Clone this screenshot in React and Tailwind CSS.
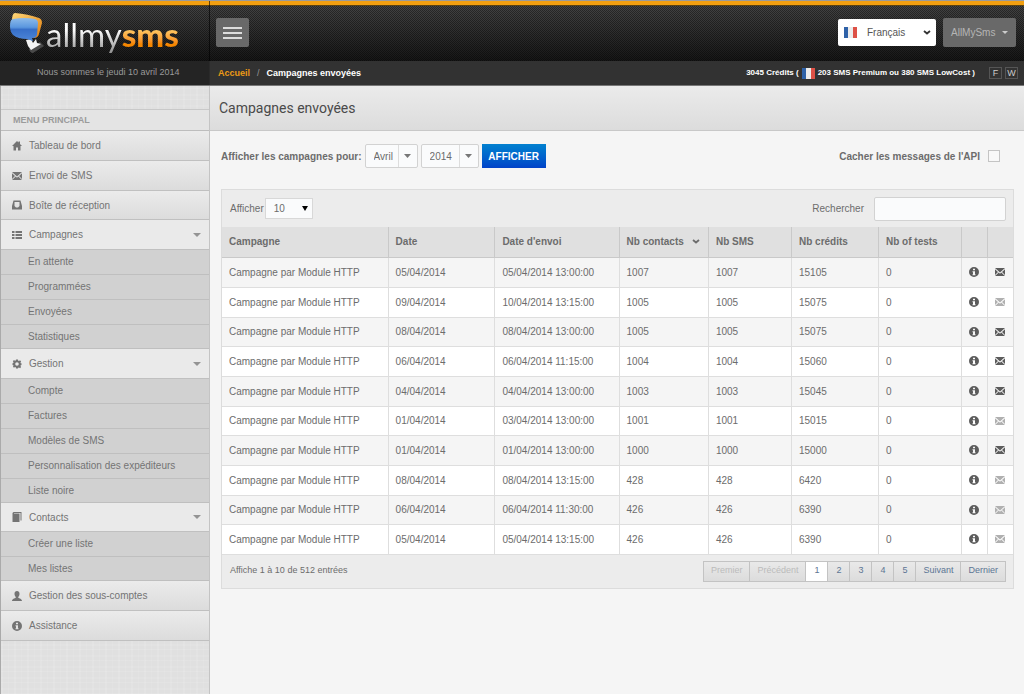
import { useState } from "react";

const MENU = [
  { label: "Tableau de bord", icon: "home" },
  { label: "Envoi de SMS", icon: "mail" },
  { label: "Boîte de réception", icon: "inbox" },
  { label: "Campagnes", icon: "list", items: ["En attente", "Programmées", "Envoyées", "Statistiques"] },
  {
    label: "Gestion",
    icon: "cog",
    items: ["Compte", "Factures", "Modèles de SMS", "Personnalisation des expéditeurs", "Liste noire"]
  },
  { label: "Contacts", icon: "book", items: ["Créer une liste", "Mes listes"] },
  { label: "Gestion des sous-comptes", icon: "user" },
  { label: "Assistance", icon: "info" }
];

const COLUMNS = [
  { label: "Campagne", width: "w-[21%]" },
  { label: "Date", width: "w-[13.5%]" },
  { label: "Date d'envoi", width: "w-[15.7%]" },
  { label: "Nb contacts", width: "w-[11.3%]", sorted: true },
  { label: "Nb SMS", width: "w-[10.5%]" },
  { label: "Nb crédits", width: "w-[11%]" },
  { label: "Nb of tests", width: "w-[10.5%]" }
];

const CAMPAIGNS = [
  { date: "05/04/2014", sent: "05/04/2014 13:00:00", contacts: 1007, credits: 15105, mail: true },
  { date: "09/04/2014", sent: "10/04/2014 13:15:00", contacts: 1005, credits: 15075, mail: false },
  { date: "08/04/2014", sent: "08/04/2014 13:00:00", contacts: 1005, credits: 15075, mail: true },
  { date: "06/04/2014", sent: "06/04/2014 11:15:00", contacts: 1004, credits: 15060, mail: true },
  { date: "04/04/2014", sent: "04/04/2014 13:00:00", contacts: 1003, credits: 15045, mail: true },
  { date: "01/04/2014", sent: "03/04/2014 13:00:00", contacts: 1001, credits: 15015, mail: false },
  { date: "01/04/2014", sent: "01/04/2014 13:00:00", contacts: 1000, credits: 15000, mail: true },
  { date: "08/04/2014", sent: "08/04/2014 13:15:00", contacts: 428, credits: 6420, mail: false },
  { date: "06/04/2014", sent: "06/04/2014 11:30:00", contacts: 426, credits: 6390, mail: false },
  { date: "05/04/2014", sent: "05/04/2014 13:15:00", contacts: 426, credits: 6390, mail: false }
];

const PAGES = ["Premier", "Précédent", "1", "2", "3", "4", "5", "Suivant", "Dernier"];

function Icon({ name, className = "" }) {
  return (
    <svg viewBox="0 0 20 20" className={`size-[10px] shrink-0 ${className}`} fill="currentColor" aria-hidden="true">
      {name === "home" && <path d="M10 0 0 10h3v9h5v-6h4v6h5v-9h3l-4-4V1h-3v2z" />}
      {name === "mail" && (
        <path d="M0 2h20L10 11zM0 4.500l6 5.500-6 6zM20 4.500v11.500l-6-6zM0 18l7.500-7 2.500 2.300 2.500-2.300L20 18z" />
      )}
      {name === "inbox" && (
        <path fillRule="evenodd" d="M3 1h14l3 11v7H0v-7zM5 4v8l3 3h4l3-3V4z" />
      )}
      {name === "list" && <path d="M0 2h5v4H0zM7 2h13v4H7zM0 8h5v4H0zM7 8h13v4H7zM0 14h5v4H0zM7 14h13v4H7z" />}
      {name === "cog" && (
        <path
          fillRule="evenodd"
          d="M8 1h4l.5 2.500 1.500.6 2.100-1.400 2.200 2.200-1.400 2.100.6 1.500L19 8.500v3.500l-1.500.5-.6 1.500 1.400 2.100-2.200 2.200-2.100-1.400-1.500.6L12 19H8l-.5-2.500-1.500-.6-2.100 1.400-2.200-2.200L3.100 14l-.6-1.500L1 12V8.500l1.500-.5.6-1.500-1.400-2.100 2.200-2.200L6 3.600 7.500 3zM10 6.500a3.600 3.600 0 1 0 0 7.200 3.600 3.600 0 0 0 0-7.200z"
        />
      )}
      {name === "book" && <path d="M3 0h16v17h-2V2H4v1h11v17H1V2z" />}
      {name === "user" && (
        <path d="M10 0c3 0 5 2 5 5.500S13.500 11 12.500 12v1.500c2 1.500 7.500 2 7.500 6.500H0c0-4.500 5.500-5 7.500-6.500V12C6.500 11 5 9 5 5.500S7 0 10 0z" />
      )}
      {name === "info" && (
        <path
          fillRule="evenodd"
          d="M10 0a10 10 0 1 1 0 20 10 10 0 0 1 0-20zM8 3.500v3h4v-3zM7 8.500v2h1v4H7v2h6v-2h-1v-6z"
        />
      )}
    </svg>
  );
}

function Caret({ className = "h-1 w-2" }) {
  return (
    <svg viewBox="0 0 8 4" preserveAspectRatio="none" className={`pointer-events-none shrink-0 ${className}`} fill="currentColor" aria-hidden="true">
      <path d="M0 0h8L4 4z" />
    </svg>
  );
}

function Chevron({ className = "" }) {
  return (
    <svg viewBox="0 0 8 5" className={`pointer-events-none h-[5px] w-2 shrink-0 ${className}`} fill="none" stroke="currentColor" strokeWidth="1.800" aria-hidden="true">
      <path d="M1 1l3 2.500L7 1" />
    </svg>
  );
}

function Flag() {
  return (
    <svg viewBox="0 0 13 11" className="h-[11px] w-[13px] shrink-0" role="img" aria-label="France">
      <rect width="13" height="11" fill="#ececec" />
      <rect width="4" height="11" fill="#2f62a8" />
      <rect x="9" width="4" height="11" fill="#dd5146" />
    </svg>
  );
}

function Logo() {
  return (
    <a href="#" className="flex items-start" aria-label="allmysms">
      <svg viewBox="0 0 37 42" className="h-[42px] w-[37px] shrink-0" aria-hidden="true">
        <defs>
          <linearGradient id="bubbleBlue" x1="0" y1="0" x2="0" y2="1">
            <stop offset="0" stopColor="#8dbbea" />
            <stop offset="0.400" stopColor="#5b97df" />
            <stop offset="0.500" stopColor="#376fc8" />
            <stop offset="1" stopColor="#4d86d8" />
          </linearGradient>
          <linearGradient id="bubbleOrange" x1="0" y1="0" x2="1" y2="1">
            <stop offset="0" stopColor="#ffd77a" />
            <stop offset="1" stopColor="#e07c0a" />
          </linearGradient>
        </defs>
        <path d="M20 36l11-7 4 4-11 7q-3 0-4-4z" fill="#4a4a4a" />
        <path d="M6 0q13 1 24 5 3 1 3 5l-3 11q-1 4-5 4L3 8q0-8 3-8z" fill="url(#bubbleOrange)" />
        <path d="M17 27l5-1 2 4 3-4 1 4 4 1-10 6-3-4z" fill="#f4f4f4" />
        <path d="M4 6q11-2 22 0 3 1 3 4l-1 12q-1 3-4 3l-1 0 1 3-6-2q-9 0-14-4-3-3-3-9 0-7 3-7z" fill="url(#bubbleBlue)" />
      </svg>
      <span className="font-[Lato] text-[33px] leading-[42px]">
        <span className="bg-linear-to-b from-white from-40% to-[#8b8b8b] bg-clip-text text-transparent">allmy</span>
        <span className="bg-linear-to-b from-[#ffd06a] from-35% to-[#f58600] to-75% bg-clip-text font-black text-transparent">sms</span>
      </span>
    </a>
  );
}

function Header() {
  return (
    <header className="flex h-[61px] border-t border-[#9b9b9b] bg-[repeating-conic-gradient(#00000066_0_25%,transparent_0_50%),linear-gradient(#484848,#161616)] bg-size-[2px_2px,100%_100%] shadow-[inset_0_4px_#f3a011,inset_0_5px_#5c4311]">
      <div className="w-[210px] shrink-0 border-r border-black/60 pt-3 pl-[9px]">
        <Logo />
      </div>
      <div className="flex grow items-start gap-[7px] pt-[17px] pr-2 pl-[6px]">
        <button type="button" aria-label="Menu" className="mr-auto flex h-[29px] w-[33px] flex-col items-center justify-center gap-[3px] rounded-xs bg-[#696969]">
          <span className="h-[2px] w-[19px] bg-[#ddd]" />
          <span className="h-[2px] w-[19px] bg-[#ddd]" />
          <span className="h-[2px] w-[19px] bg-[#ddd]" />
        </button>
        <div className="mt-px flex h-[27px] w-[98px] items-center gap-[10px] rounded-xs bg-white pr-[5px] pl-[6px]">
          <Flag />
          <select aria-label="Langue" className="min-w-0 grow appearance-none text-[10px] text-[#555]">
            <option>Français</option>
          </select>
          <Chevron className="text-[#333]" />
        </div>
        <button type="button" className="flex h-[29px] w-[73px] items-center justify-between rounded-xs bg-[#696969] px-2 text-[10px] text-[#b5b5b5]">
          AllMySms
          <Caret className="h-[3px] w-[6px] text-[#ccc]" />
        </button>
      </div>
    </header>
  );
}

function SubHeader() {
  return (
    <div className="flex h-[25px] items-center border-b border-[#777] bg-[#323232] text-[9px] font-bold text-white">
      <div className="flex w-[210px] shrink-0 items-center self-stretch border-r border-[#2a2a2a] bg-[#242424] pl-[37px] font-normal text-[#9a9a9a]">
        Nous sommes le jeudi 10 avril 2014
      </div>
      <nav className="flex grow gap-[7px] pt-px pl-2">
        <a href="#" className="text-[#eb9a15]">Accueil</a>
        <span className="font-normal text-[#999]">/</span>
        <span>Campagnes envoyées</span>
      </nav>
      <p className="flex items-center gap-[3px] pr-[14px] text-[8px]">
        3045 Crédits ( <Flag /> 203 SMS Premium ou 380 SMS LowCost )
      </p>
      <div className="flex gap-[3px] pr-[6px] font-normal text-[#ccc]">
        <button type="button" className="h-3 w-[13px] border border-[#555] leading-[10px]">F</button>
        <button type="button" className="h-3 w-[13px] border border-[#555] leading-[10px]">W</button>
      </div>
    </div>
  );
}

function Sidebar() {
  return (
    <aside className="w-[210px] shrink-0 border-r border-l border-r-[#c4c4c4] border-l-[#aaa] bg-[#e0e0e0] bg-[repeating-linear-gradient(0deg,#ffffff18_0_1px,transparent_1px_4px,#ffffff14_4px_6px,transparent_6px_11px),repeating-linear-gradient(90deg,#ffffff18_0_2px,transparent_2px_7px,#ffffff14_7px_8px,transparent_8px_13px)] pt-[23px] text-[10px] text-[#747474]">
      <h2 className="h-[22px] border-t border-b border-t-[#c9c9c9] border-b-[#bdbdbd] bg-[#e4e4e4] pl-3 text-[9px] leading-5 font-bold text-[#9b9b9b]">
        MENU PRINCIPAL
      </h2>
      <ul>
        {MENU.map((entry) => (
          <li key={entry.label} className="[&:nth-child(3n)>a]:h-[29px]">
            <a
              href="#"
              className={`flex h-[30px] items-center gap-[7px] border-b border-[#c0c0c0] pr-2 pl-[11px] ${
                entry.items ? "bg-[#eaeaea]" : "bg-linear-to-b from-[#ebebeb] to-[#dcdcdc]"
              }`}
            >
              <Icon name={entry.icon} />
              <span className="grow">{entry.label}</span>
              {entry.items && <Caret className="h-1 w-2 text-[#949494]" />}
            </a>
            {entry.items && (
              <ul>
                {entry.items.map((item) => (
                  <li key={item} className="h-[25px] border-b border-[#bfbfbf] bg-[#d1d1d1] last:h-6">
                    <a href="#" className="block pl-[27px] leading-6">{item}</a>
                  </li>
                ))}
              </ul>
            )}
          </li>
        ))}
      </ul>
    </aside>
  );
}

function FilterSelect({ id, label, value, className }) {
  return (
    <div className={`relative flex h-6 items-center rounded-xs border border-[#d2d2d2] bg-[#fafbfc] text-[10px] ${className}`}>
      <select id={id} aria-label={label} className="h-full w-full appearance-none pl-2">
        <option>{value}</option>
      </select>
      <span className="pointer-events-none absolute inset-y-0 right-0 flex w-[19px] items-center justify-center border-l border-[#ddd]">
        <Caret className="h-1 w-[7px] text-[#777]" />
      </span>
    </div>
  );
}

function Filters() {
  const [hideApi, setHideApi] = useState(false);

  return (
    <form className="flex items-center gap-[3px] pr-[14px]" onSubmit={(e) => e.preventDefault()}>
      <label htmlFor="month" className="text-[10px] font-bold">Afficher les campagnes pour:</label>
      <FilterSelect id="month" label="Mois" value="Avril" className="w-[53px]" />
      <FilterSelect id="year" label="Année" value="2014" className="w-[58px]" />
      <button type="submit" className="h-6 w-16 bg-linear-to-b from-[#0581cf] to-[#0342c8] text-[10px] font-bold text-white">
        AFFICHER
      </button>
      <label className="ml-auto flex items-center gap-2 text-[10px] font-bold">
        Cacher les messages de l'API
        <input
          type="checkbox"
          checked={hideApi}
          onChange={(e) => setHideApi(e.target.checked)}
          className="size-3 appearance-none border border-[#c4c4c4] bg-[#f8f8f8] checked:bg-[#0581cf]"
        />
      </label>
    </form>
  );
}

function CampaignTable() {
  return (
    <table className="w-full table-fixed border-collapse text-left text-[10px]">
      <thead>
        <tr className="h-[30px] bg-[#e0e0e0]">
          {COLUMNS.map((col) => (
            <th key={col.label} className={`border-r border-b border-[#c9c9c9] pl-[7px] ${col.width}`}>
              <span className="flex items-center justify-between pr-2">
                {col.label}
                {col.sorted && <Chevron />}
              </span>
            </th>
          ))}
          <th aria-label="Détails" className="border-r border-b border-[#c9c9c9]" />
          <th aria-label="Message" className="border-b border-[#c9c9c9]" />
        </tr>
      </thead>
      <tbody className="[&_td]:border-r [&_td]:border-b [&_td]:border-[#dedede] [&_td]:pl-[7px] [&_td:last-child]:border-r-0">
        {CAMPAIGNS.map((row, i) => (
          <tr key={i} className="h-[30px] bg-[#f5f5f5] even:bg-white nth-[3n]:h-[29px]">
            <td>Campagne par Module HTTP</td>
            <td>{row.date}</td>
            <td>{row.sent}</td>
            <td>{row.contacts}</td>
            <td>{row.contacts}</td>
            <td>{row.credits}</td>
            <td>0</td>
            <td><Icon name="info" className="text-[#5c5c5c]" /></td>
            <td><Icon name="mail" className={row.mail ? "text-[#5c5c5c]" : "text-[#b0b0b0]"} /></td>
          </tr>
        ))}
      </tbody>
    </table>
  );
}

function Pagination() {
  const [page, setPage] = useState("1");

  return (
    <nav aria-label="Pagination" className="flex h-[21px] border border-[#c3c3c3] text-[9px]">
      {PAGES.map((label, i) => (
        <button
          key={label}
          type="button"
          disabled={i < 2}
          onClick={() => setPage(label)}
          className={`min-w-[22px] border-r border-[#c3c3c3] px-[7px] text-[#5c7594] last:border-r-0 disabled:text-[#bbb] ${
            page === label ? "bg-white" : "bg-linear-to-b from-[#e9e9e9] to-[#dcdcdc]"
          }`}
        >
          {label}
        </button>
      ))}
    </nav>
  );
}

export default function App() {
  return (
    <div className="flex min-h-screen flex-col bg-[#f5f5f5] font-['Liberation_Sans',Arial,sans-serif] text-[#6c6c6c]">
      <Header />
      <SubHeader />
      <div className="flex grow">
        <Sidebar />
        <main className="min-w-0 grow">
          <h1 className="h-[45px] border-b border-[#c8c8c8] bg-linear-to-b from-[#ebebeb] to-[#dcdcdc] pl-[9px] font-[Roboto] text-[14px] leading-[44px] text-[#4a4a4a]">
            Campagnes envoyées
          </h1>
          <div className="flex flex-col gap-[21px] py-[13px] pr-[10px] pl-[11px]">
            <Filters />
            <section className="border border-[#dcdcdc] bg-[#ececec]">
              <div className="flex h-[37px] items-center pr-[7px] pl-2 text-[10px]">
                <label htmlFor="pageSize" className="pr-px">Afficher</label>
                <div className="relative flex items-center">
                  <select id="pageSize" className="h-[21px] w-12 appearance-none border border-[#d8d8d8] bg-[#fafbfc] pl-2">
                    <option>10</option>
                  </select>
                  <Caret className="absolute right-[5px] h-[5px] w-[6px] text-black" />
                </div>
                <label htmlFor="search" className="ml-auto pr-[10px]">Rechercher</label>
                <input id="search" type="search" className="h-6 w-[132px] rounded-xs border border-[#d2d2d2] bg-[#fafbfc] px-2" />
              </div>
              <CampaignTable />
              <div className="flex h-[33px] items-center justify-between pr-[7px] pl-2 text-[9px]">
                <p>Affiche 1 à 10 de 512 entrées</p>
                <Pagination />
              </div>
            </section>
          </div>
        </main>
      </div>
    </div>
  );
}
